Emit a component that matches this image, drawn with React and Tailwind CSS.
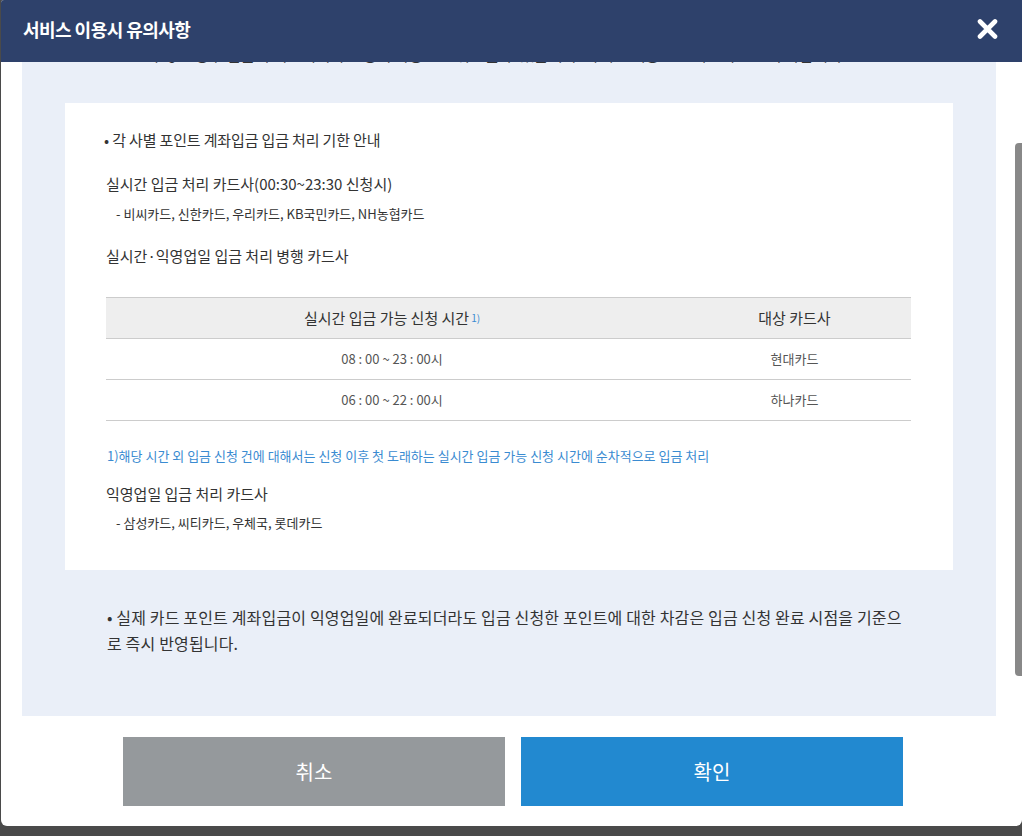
import React, { useLayoutEffect, useRef } from 'react';

function CloseIcon() {
    return (
        <svg width="21" height="20" viewBox="0 0 21 20" fill="none">
            <path d="M3 2.5L18 17.5M18 2.5L3 17.5" stroke="white" strokeWidth="4.6" strokeLinecap="round" />
        </svg>
    );
}

const rows = [
    { time: '08 : 00 ~ 23 : 00시', card: '현대카드' },
    { time: '06 : 00 ~ 22 : 00시', card: '하나카드' },
];

export default function App() {
    const scrollRef = useRef(null);
    const boxRef = useRef(null);

    useLayoutEffect(() => {
        // keep the scroll position where the notice box sits under the header
        if (scrollRef.current && boxRef.current) {
            scrollRef.current.scrollTop = boxRef.current.offsetTop - 41;
        }
    }, []);

    return (
        <div className="h-[836px] w-full bg-[#4a4a4a] font-['Noto_Sans_CJK_KR',sans-serif]">
            <div className="ml-px w-[1021px] h-[826px] bg-white rounded-b-[6px] rounded-tl-[3px] overflow-hidden flex flex-col">
                <div className="h-[62px] shrink-0 bg-[#2e416b] flex items-center justify-between pl-[22px] pr-[24px] pb-[5px]">
                    <h1 className="text-white text-[18px] leading-[26px] font-bold tracking-[-0.03em]">서비스 이용시 유의사항</h1>
                    <button className="flex items-center justify-center">
                        <CloseIcon />
                    </button>
                </div>

                <div className="relative h-[654px] shrink-0">
                    <div ref={scrollRef} className="h-full overflow-hidden">
                        <div className="ml-[21px] w-[974px] bg-[#eaeff8] pt-[40px] pb-[80px]">
                            <p className="pl-[108px] w-[890px] text-[16px] leading-[26px] text-[#333] tracking-[-0.02em]">
                                포인트 계좌입금은 본인 명의의 계좌로만 신청 가능하며, 신청이 완료된 이후에는 취소가 불가합니다.
                                입금 계좌 정보가 올바르지 않은 경우 입금이 지연되거나 신청이 자동으로 취소될 수 있습니다. 자세한 내용은 고객센터로 문의 바랍니다.
                            </p>

                            <div ref={boxRef} className="mt-[36px] ml-[43px] w-[888px] bg-white pt-[26px] pb-[37px] pl-[41px] pr-[42px] text-[#333]">
                                <p className="text-[15px] leading-[22px] -ml-[2px] tracking-[-0.01em]">• 각 사별 포인트 계좌입금 입금 처리 기한 안내</p>
                                <p className="mt-[22px] text-[15px] leading-[22px]">실시간 입금 처리 카드사(00:30~23:30 신청시)</p>
                                <p className="mt-[9px] pl-[10px] text-[13px] leading-[20px]">- 비씨카드, 신한카드, 우리카드, KB국민카드, NH농협카드</p>
                                <p className="mt-[21px] text-[15px] leading-[22px]">실시간·익영업일 입금 처리 병행 카드사</p>

                                <table className="mt-[30px] w-full border-collapse">
                                    <thead>
                                        <tr className="bg-[#eeeeee] border-t border-b border-[#cccccc]">
                                            <th className="h-[41px] w-[572px] p-0 text-[15px] font-normal text-[#333] text-center">
                                                실시간 입금 가능 신청 시간
                                                <span className="ml-[2px] text-[10px] text-[#3a8bd1] align-[2px]">1)</span>
                                            </th>
                                            <th className="h-[41px] p-0 text-[15px] font-normal text-[#333] text-center">대상 카드사</th>
                                        </tr>
                                    </thead>
                                    <tbody>
                                        {rows.map((r) => (
                                            <tr key={r.card} className="border-b border-[#cccccc]">
                                                <td className="h-[41px] p-0 text-[13px] text-[#555] text-center">{r.time}</td>
                                                <td className="h-[41px] p-0 text-[13px] text-[#555] text-center">{r.card}</td>
                                            </tr>
                                        ))}
                                    </tbody>
                                </table>

                                <p className="mt-[25px] pl-px text-[13px] leading-[20px] text-[#3a8bd1]">
                                    1)해당 시간 외 입금 신청 건에 대해서는 신청 이후 첫 도래하는 실시간 입금 가능 신청 시간에 순차적으로 입금 처리
                                </p>
                                <p className="mt-[17px] text-[15px] leading-[22px]">익영업일 입금 처리 카드사</p>
                                <p className="mt-[8px] pl-[10px] text-[13px] leading-[20px]">- 삼성카드, 씨티카드, 우체국, 롯데카드</p>
                            </div>

                            <p className="mt-[34px] ml-[85px] w-[805px] text-[16px] leading-[26px] text-[#333] tracking-[0.01em]">
                                • 실제 카드 포인트 계좌입금이 익영업일에 완료되더라도 입금 신청한 포인트에 대한 차감은 입금 신청 완료 시점을 기준으로 즉시 반영됩니다.
                            </p>
                        </div>
                    </div>
                    <div className="absolute right-0 top-[81px] h-[533px] w-[7px] rounded-l-[4px] bg-[#888888]" />
                </div>

                <div className="flex gap-4 pl-[122px] pt-[21px]">
                    <button className="w-[382px] h-[69px] bg-[#95999c] text-white text-[20px]">취소</button>
                    <button className="w-[382px] h-[69px] bg-[#2289d0] text-white text-[20px]">확인</button>
                </div>
            </div>
        </div>
    );
}
